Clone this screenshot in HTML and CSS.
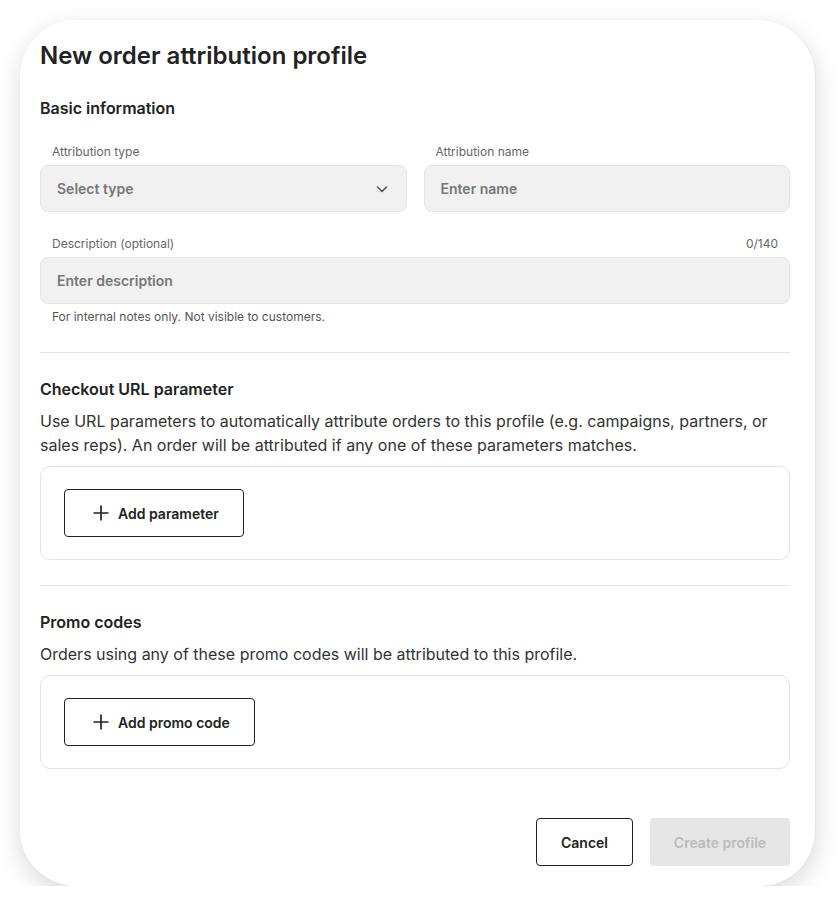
FILE: index.html
```html
<!DOCTYPE html>
<html lang="en">
<head>
    <meta charset="UTF-8">
    <title>New order attribution profile</title>
    <link rel="stylesheet" href="styles.css">
</head>
<body>

    <div class="modal">
        <h1 class="modal-title">New order attribution profile</h1>

        <!-- Basic information -->
        <section class="section section-form">
            <h2 class="section-title">Basic information</h2>

            <div class="row">
                <div class="field">
                    <label class="field-label">Attribution type</label>
                    <div class="input">
                        <span>Select type</span>
                        <svg width="16" height="16" viewBox="0 0 16 16" fill="none" stroke="#555" stroke-width="1.6" stroke-linecap="round" stroke-linejoin="round"><path d="M3.5 6l4.5 4.5L12.5 6"/></svg>
                    </div>
                </div>
                <div class="field">
                    <label class="field-label">Attribution name</label>
                    <div class="input">Enter name</div>
                </div>
            </div>

            <div class="field field-wide">
                <div class="label-row">
                    <label class="field-label">Description (optional)</label>
                    <span class="field-label">0/140</span>
                </div>
                <div class="input">Enter description</div>
                <p class="help">For internal notes only. Not visible to customers.</p>
            </div>
        </section>

        <hr class="divider">

        <!-- Checkout URL parameter -->
        <section class="section">
            <h2 class="section-title">Checkout URL parameter</h2>
            <p class="section-text">Use URL parameters to automatically attribute orders to this profile (e.g. campaigns, partners, or sales reps). An order will be attributed if any one of these parameters matches.</p>
            <div class="box">
                <button class="add-btn">
                    <svg width="16" height="16" viewBox="0 0 16 16" stroke="#222" stroke-width="1.7"><path d="M8 0.5v15M0.5 8h15"/></svg>
                    Add parameter
                </button>
            </div>
        </section>

        <hr class="divider">

        <!-- Promo codes -->
        <section class="section">
            <h2 class="section-title">Promo codes</h2>
            <p class="section-text">Orders using any of these promo codes will be attributed to this profile.</p>
            <div class="box">
                <button class="add-btn">
                    <svg width="16" height="16" viewBox="0 0 16 16" stroke="#222" stroke-width="1.7"><path d="M8 0.5v15M0.5 8h15"/></svg>
                    Add promo code
                </button>
            </div>
        </section>

        <!-- Footer -->
        <div class="footer">
            <button class="btn btn-secondary">Cancel</button>
            <button class="btn btn-disabled">Create profile</button>
        </div>
    </div>

</body>
</html>
```

FILE: styles.css
```css
/* Global */
* {
    margin: 0;
    padding: 0;
    box-sizing: border-box;
}

body {
    background: #ffffff;
    font-family: Inter, "Noto Sans", Arial, sans-serif;
    color: #222;
}

/* Modal */
.modal {
    width: 796px;
    height: 866px;
    margin: 20px 0 0 20px;
    padding: 20px 25px 20px 20px;
    background: #fff;
    border-right: 1px solid #e4e4e4;
    border-radius: 56px;
    box-shadow: 0 8px 24px rgba(0, 0, 0, 0.15);
    display: flex;
    flex-direction: column;
}

.modal-title {
    font-size: 24px;
    line-height: 32px;
    font-weight: 600;
    color: #222;
    margin-bottom: 24px;
}

/* Sections */
.section {
    padding-bottom: 25px;
}

.section-form {
    padding-bottom: 27px;
}

.section-title {
    font-size: 16px;
    line-height: 24px;
    font-weight: 600;
    color: #222;
}

.section-text {
    font-size: 16px;
    line-height: 24px;
    color: #333;
    margin-top: 8px;
}

.divider {
    border: none;
    border-top: 1px solid #e4e4e4;
    margin-bottom: 24px;
}

/* Fields */
.row {
    display: grid;
    grid-template-columns: 1fr 1fr;
    gap: 17px;
    margin-top: 24px;
}

.field-wide {
    margin-top: 24px;
}

.field-label {
    display: block;
    font-size: 12px;
    line-height: 16px;
    color: #666;
    padding: 0 12px;
    margin-bottom: 5px;
}

.label-row {
    display: flex;
    justify-content: space-between;
}

.input {
    height: 47px;
    display: flex;
    align-items: center;
    justify-content: space-between;
    padding: 0 16px;
    background: #f1f1f1;
    border: 1px solid #e5e5e5;
    border-radius: 8px;
    font-size: 14px;
    font-weight: 600;
    color: #777;
}

.help {
    font-size: 12px;
    line-height: 16px;
    color: #555;
    padding: 0 12px;
    margin-top: 5px;
}

/* Boxes */
.box {
    margin-top: 9px;
    padding: 22px 23px;
    border: 1px solid #e4e4e4;
    border-radius: 10px;
}

.add-btn {
    height: 48px;
    display: inline-flex;
    align-items: center;
    gap: 9px;
    padding: 0 24px 0 28px;
    background: #fff;
    border: 1px solid #222;
    border-radius: 4px;
    font-family: inherit;
    font-size: 14px;
    font-weight: 600;
    color: #222;
    cursor: pointer;
}

/* Footer */
.footer {
    margin-top: auto;
    display: flex;
    justify-content: flex-end;
    gap: 17px;
}

.btn {
    height: 48px;
    border-radius: 4px;
    font-family: inherit;
    font-size: 14px;
    font-weight: 600;
    cursor: pointer;
}

.btn-secondary {
    width: 97px;
    background: #fff;
    border: 1px solid #222;
    color: #222;
}

.btn-disabled {
    width: 140px;
    background: #e6e6e6;
    border: none;
    color: #bbb;
    cursor: default;
}
```
